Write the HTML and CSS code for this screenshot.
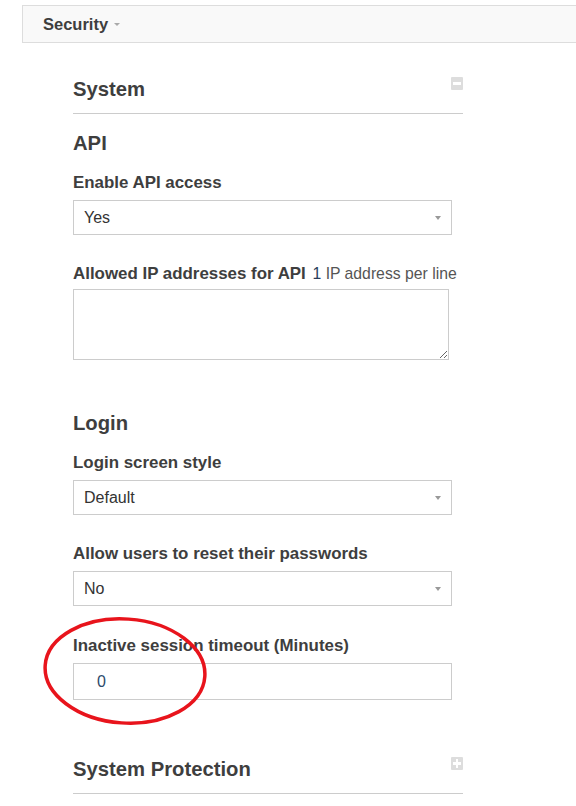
FILE: index.html
```html
<!DOCTYPE html>
<html lang="en">
<head>
    <meta charset="UTF-8">
    <meta name="viewport" content="width=device-width, initial-scale=1.0">
    <title>Security Settings</title>
    <link rel="stylesheet" href="styles.css">
</head>
<body>
    <div class="tabbar">
        <span class="tab">Security <span class="tab-caret"></span></span>
    </div>

    <div class="content">
        <div class="panel">
            <div class="panel-head">
                <h2>System</h2>
                <span class="toggle minus"></span>
            </div>
            <div class="panel-body">
                <h3>API</h3>
                <div class="field">
                    <label for="api_enabled">Enable API access</label>
                    <div class="select-wrap">
                        <select id="api_enabled">
                            <option>Yes</option>
                            <option>No</option>
                        </select>
                    </div>
                </div>
                <div class="field">
                    <label class="tight" for="api_ips">Allowed IP addresses for API <span class="hint"><span class="hint-num">1</span> IP address per line</span></label>
                    <textarea id="api_ips"></textarea>
                </div>

                <h3 class="sub">Login</h3>
                <div class="field">
                    <label for="login_style">Login screen style</label>
                    <div class="select-wrap">
                        <select id="login_style">
                            <option>Default</option>
                        </select>
                    </div>
                </div>
                <div class="field">
                    <label for="pw_reset">Allow users to reset their passwords</label>
                    <div class="select-wrap">
                        <select id="pw_reset">
                            <option>No</option>
                            <option>Yes</option>
                        </select>
                    </div>
                </div>
                <div class="field marked">
                    <label for="session_timeout">Inactive session timeout (Minutes)</label>
                    <input type="text" id="session_timeout" value="0">
                    <svg class="circle-mark" width="170" height="116" viewBox="0 0 170 116">
                        <ellipse cx="83" cy="55" rx="80" ry="52" transform="rotate(4 83 55)" fill="none" stroke="#e8141c" stroke-width="3.5"/>
                    </svg>
                </div>
            </div>
        </div>

        <div class="panel">
            <div class="panel-head">
                <h2>System Protection</h2>
                <span class="toggle plus"></span>
            </div>
        </div>
    </div>
</body>
</html>
```

FILE: styles.css
```css
body {
    font-family: "Liberation Sans", Arial, sans-serif;
    color: #3e3e3e;
    background: #fff;
    margin: 0;
    padding-top: 5px;
}
.tabbar {
    margin-left: 22px;
    height: 36px;
    background: #f9f9f9;
    border: 1px solid #ddd;
    border-right: none;
    display: flex;
    align-items: center;
    padding-left: 20px;
}
.tab {
    font-size: 16.5px;
    font-weight: bold;
    display: flex;
    align-items: center;
}
.tab-caret {
    display: inline-block;
    margin-left: 6px;
    border-left: 3px solid transparent;
    border-right: 3px solid transparent;
    border-top: 3px solid #aaa;
}
.content {
    margin-left: 73px;
    width: 390px;
    padding-top: 34px;
}
.panel-head {
    display: flex;
    justify-content: space-between;
    align-items: flex-start;
    border-bottom: 1px solid #ccc;
    padding-bottom: 12px;
}
h2 {
    margin: 0;
    font-size: 20.25px;
    line-height: 24px;
    font-weight: bold;
}
.toggle {
    position: relative;
    width: 12px;
    height: 13px;
    background: #ddd;
    border-radius: 1px;
}
.toggle::before {
    content: "";
    position: absolute;
    left: 2px;
    top: 5px;
    width: 8px;
    height: 3px;
    background: #fff;
}
.toggle.plus::after {
    content: "";
    position: absolute;
    left: 5px;
    top: 2px;
    width: 2px;
    height: 9px;
    background: #fff;
}
.panel-body {
    padding-top: 17px;
    padding-bottom: 57px;
}
h3 {
    margin: 0 0 18px;
    font-size: 20.25px;
    line-height: 24px;
    font-weight: bold;
}
h3.sub {
    margin-top: 51px;
}
.field {
    margin-bottom: 29px;
}
.field:last-child {
    margin-bottom: 0;
}
label {
    display: block;
    font-size: 16.9px;
    line-height: 20px;
    height: 20px;
    font-weight: bold;
    margin-bottom: 7px;
    white-space: nowrap;
}
label.tight {
    margin-bottom: 5px;
}
.hint {
    font-weight: normal;
    font-size: 15.75px;
    line-height: 1;
    color: #555;
    margin-left: 2px;
}
.hint-num {
    color: #2b3e5c;
}
.select-wrap {
    position: relative;
    width: 379px;
}
.select-wrap::after {
    content: "";
    position: absolute;
    right: 11px;
    top: 16px;
    border-left: 3px solid transparent;
    border-right: 3px solid transparent;
    border-top: 4px solid #999;
    pointer-events: none;
}
select, input, textarea {
    font-family: "Liberation Sans", Arial, sans-serif;
    font-size: 16px;
    color: #333;
    border: 1px solid #ccc;
    border-radius: 0;
    background: #fff;
    box-sizing: border-box;
    margin: 0;
}
select {
    appearance: none;
    -webkit-appearance: none;
    width: 379px;
    height: 35px;
    padding: 0 10px;
}
textarea {
    display: block;
    width: 376px;
    height: 71px;
    padding: 6px 10px;
}
input {
    display: block;
    width: 379px;
    height: 37px;
    padding: 0 10px 0 23px;
    color: #2d4a6b;
}
.marked {
    position: relative;
    padding-top: 1px;
}
.circle-mark {
    position: absolute;
    left: -31px;
    top: -19px;
    pointer-events: none;
}
```
